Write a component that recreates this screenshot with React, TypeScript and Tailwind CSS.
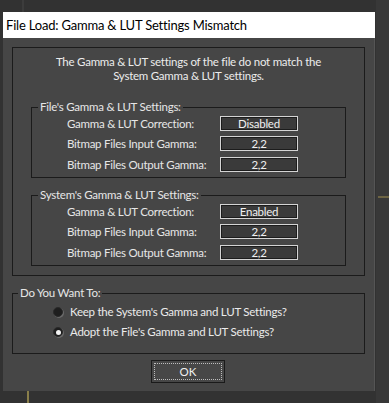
const font = { fontFamily: 'Lato, "Noto Sans", sans-serif' };

function ValueRow({ label, value }: { label: string; value: string }) {
  return (
    <div className="flex items-center h-[20.5px]">
      <div className="w-[188px] pl-[35px] text-[11.5px] tracking-[-0.25px] text-[#e6e6e6] leading-none whitespace-nowrap">{label}</div>
      <div className="w-[78px] h-[15px] border border-[#d4d4d4] bg-[#3a3a3a] shadow-[inset_1px_1px_0_#1c1c1c,inset_-1px_-1px_0_#1c1c1c] flex items-center justify-center text-[11.5px] tracking-[-0.25px] text-[#f0f0f0] leading-none">
        {value}
      </div>
    </div>
  );
}

function GroupBox({
  title,
  rows,
}: {
  title: string;
  rows: [string, string][];
}) {
  return (
    <div className="relative mx-[18px] border border-[#1b1b1b] h-[71px] pt-[5px]">
      <div className="absolute -top-[9px] left-[6px] px-[2px] bg-[#464646] text-[11.5px] tracking-[-0.25px] text-[#e6e6e6] leading-[16px] whitespace-nowrap">
        {title}
      </div>
      {rows.map(([l, v]) => (
        <ValueRow key={l} label={l} value={v} />
      ))}
    </div>
  );
}

function Radio({ checked, label }: { checked?: boolean; label: string }) {
  return (
    <div className="flex items-center h-[20px] pl-[40px]">
      <div className="w-[10px] h-[10px] rounded-full bg-[#1e1e1e] border border-[#2a2a2a] shadow-[1px_1px_0_#6a6a6a] flex items-center justify-center">
        {checked && <div className="w-[5px] h-[5px] rounded-full bg-[#f2f2f2]" />}
      </div>
      <div className="ml-[7px] text-[11.5px] tracking-[-0.25px] text-[#ebebeb] leading-none whitespace-nowrap">{label}</div>
    </div>
  );
}

export default function App() {
  return (
    <div className="relative w-[389px] h-[403px] bg-[#323232] overflow-hidden pt-[12px] pl-[3px]" style={font}>
      {/* background scene lines */}
      <div className="absolute left-[22px] top-0 w-[2px] h-[12px] bg-[#3c3c3c]" />
      <div className="absolute left-[27px] top-[391px] w-[2px] h-[12px] bg-[#8a7f4a]" />
      <div className="absolute left-[376px] top-[0px] w-[13px] h-[403px] bg-[#383838]" />
      <div className="absolute left-[378px] top-[196px] w-[11px] h-[2px] bg-[#6d6443]" />

      <div className="relative w-[372px] h-[379px] flex flex-col">
        <div className="h-[26px] bg-white flex items-center pl-[3px] text-[13px] tracking-[-0.2px] text-black leading-none whitespace-nowrap">
          File Load: Gamma &amp; LUT Settings Mismatch
        </div>
        <div className="flex-1 bg-[#464646] pl-[9px] pt-[9px] border-r border-[#555]">
          <div className="w-[353px] h-[229px] border border-[#1b1b1b]">
            <div className="pt-[7px] text-center text-[11.5px] tracking-[-0.25px] text-[#ececec] leading-[14px]">
              <div>The Gamma &amp; LUT settings of the file do not match the</div>
              <div>System Gamma &amp; LUT settings.</div>
            </div>
            <div className="mt-[24px]">
              <GroupBox
                title="File's Gamma & LUT Settings:"
                rows={[
                  ["Gamma & LUT Correction:", "Disabled"],
                  ["Bitmap Files Input Gamma:", "2,2"],
                  ["Bitmap Files Output Gamma:", "2,2"],
                ]}
              />
            </div>
            <div className="mt-[17px]">
              <GroupBox
                title="System's Gamma & LUT Settings:"
                rows={[
                  ["Gamma & LUT Correction:", "Enabled"],
                  ["Bitmap Files Input Gamma:", "2,2"],
                  ["Bitmap Files Output Gamma:", "2,2"],
                ]}
              />
            </div>
          </div>

          <div className="relative mt-[17px] w-[353px] h-[61px] border border-[#1b1b1b] pt-[8px]">
            <div className="absolute -top-[9px] left-[5px] px-[2px] bg-[#464646] text-[11.5px] tracking-[-0.25px] text-[#e6e6e6] leading-[16px]">
              Do You Want To:
            </div>
            <Radio label="Keep the System's Gamma and LUT Settings?" />
            <Radio checked label="Adopt the File's Gamma and LUT Settings?" />
          </div>

          <div className="mt-[6px] ml-[139px] w-[74px] h-[23px] border border-[#1a1a1a] bg-[#474747] p-[2px]">
            <div className="w-full h-full border border-dotted border-[#bdbdbd] flex items-center justify-center text-[11.5px] text-[#f0f0f0] leading-none">
              OK
            </div>
          </div>
        </div>
      </div>
    </div>
  );
}
